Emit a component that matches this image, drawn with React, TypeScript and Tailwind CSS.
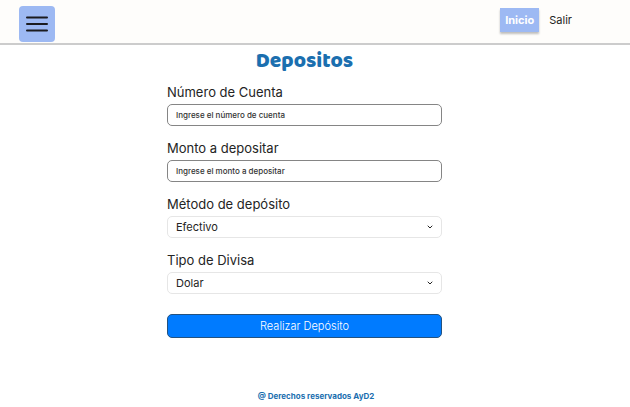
import { ChevronDown } from "lucide-react";

type TextFieldProps = { id: string; label: string; placeholder: string };
type SelectFieldProps = { id: string; label: string; options: string[] };

function TextField({ id, label, placeholder }: TextFieldProps) {
  return (
    <div className="flex flex-col gap-0.5">
      <label htmlFor={id} className="text-[13px] leading-5">
        {label}
      </label>
      <input
        id={id}
        type="text"
        placeholder={placeholder}
        className="h-[22px] w-full rounded-[5px] border border-[#858585] bg-white px-2 text-[8px] font-medium placeholder:text-[#333333]"
      />
    </div>
  );
}

function SelectField({ id, label, options }: SelectFieldProps) {
  return (
    <div className="flex flex-col gap-0.5">
      <label htmlFor={id} className="text-[13px] leading-5">
        {label}
      </label>
      <div className="relative">
        <select
          id={id}
          className="block h-[22px] w-full appearance-none rounded-[5px] border border-[#e6e6e6] bg-white px-2 text-[11px]"
        >
          {options.map((option) => (
            <option key={option}>{option}</option>
          ))}
        </select>
        <ChevronDown
          size={8}
          strokeWidth={3}
          className="pointer-events-none absolute top-1/2 right-2 -translate-y-1/2"
        />
      </div>
    </div>
  );
}

export default function App() {
  return (
    <div className="flex min-h-screen flex-col bg-white font-['Inter',sans-serif] text-[#242424]">
      <header className="flex h-[45px] items-center justify-between border-b-2 border-[#cccccc] bg-[#fefdfb] pr-[53px] pl-[19px]">
        <button
          type="button"
          aria-label="Menú"
          className="mt-[5px] flex size-9 items-center justify-center rounded bg-[#9db9f3] text-[#1b1b1f]"
        >
          <svg width="22" height="16" viewBox="0 0 22 16" stroke="currentColor" strokeWidth="2" strokeLinecap="round" aria-hidden="true">
            <path d="M1 1.5h20M1 8h20M1 14.5h20" />
          </svg>
        </button>
        <nav className="mb-[3px] flex items-center text-[11px]">
          <a href="#inicio" className="flex h-6 items-center bg-[#9db9f3] px-[5px] font-bold text-white shadow-[0_2px_2px_#00000040]">
            Inicio
          </a>
          <a href="#salir" className="ml-[5px] px-[5px]">
            Salir
          </a>
        </nav>
      </header>

      <main className="flex flex-1 flex-col items-center pr-[21px]">
        <h1 className="mt-0.5 font-['Baloo_2','Baloo','Lato',sans-serif] text-[21px] leading-7 font-black text-[#1b6faf]">
          Depositos
        </h1>
        <form className="mt-[7px] flex w-full max-w-[275px] flex-col gap-3" onSubmit={(event) => event.preventDefault()}>
          <TextField id="cuenta" label="Número de Cuenta" placeholder="Ingrese el número de cuenta" />
          <TextField id="monto" label="Monto a depositar" placeholder="Ingrese el monto a depositar" />
          <SelectField id="metodo" label="Método de depósito" options={["Efectivo"]} />
          <SelectField id="divisa" label="Tipo de Divisa" options={["Dolar"]} />
          <button type="submit" className="mt-2 h-6 rounded-[5px] border border-[#24527f] bg-[#007bff] text-[11px] font-light text-white">
            Realizar Depósito
          </button>
        </form>
      </main>

      <footer className="pb-[3px] pl-0.5 text-center text-[8px] leading-4 font-bold text-[#1b6faf]">
        @ Derechos reservados AyD2
      </footer>
    </div>
  );
}
